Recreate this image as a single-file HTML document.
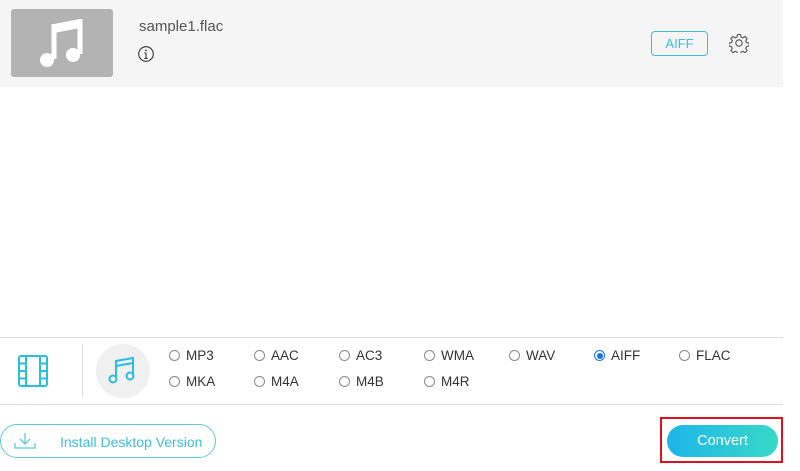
<!DOCTYPE html>
<html><head><meta charset="utf-8"><style>
body{margin:0;width:800px;height:471px;background:#fff;font-family:"Liberation Sans",Arial,sans-serif;position:relative;overflow:hidden}
.abs{position:absolute}
.top{left:0;top:0;width:783px;height:87px;background:#f5f5f5}
.thumb{left:11px;top:9px;width:102px;height:68px;background:#b3b3b3;border-radius:3px}
.fn{left:139px;top:18px;font-size:15px;color:#555}
.aiff{left:651px;top:31px;width:55px;height:23px;border:1px solid #3cbfd6;border-radius:4px;color:#3cbfd6;font-size:13px;text-align:center;line-height:23px}
.hl{left:0;width:783px;height:1px;background:#ddd}
.r{position:absolute;font-size:13.5px;color:#333}
.r i{position:absolute;left:-17px;top:2px;width:9px;height:9px;border:1px solid #888;border-radius:50%}
.r i.on{border-color:#1a73e8}
.r i.on:after{content:"";position:absolute;left:1.5px;top:1.5px;width:6px;height:6px;border-radius:50%;background:#1a73e8}
.inst{left:0;top:424px;width:214px;height:32px;border:1px solid #62c8d9;border-radius:17px;color:#3cbfd6;font-size:14px}
.conv{left:667px;top:425px;width:111px;height:32px;border-radius:16px;background:linear-gradient(90deg,#1db5ea,#37d9c7);color:#fff;font-size:14.5px;text-align:center;line-height:32px}
.red{left:660px;top:417px;width:119px;height:42px;border:2px solid #e01020}
</style></head><body>
<div class="abs top"></div>
<div class="abs thumb"><svg width="102" height="68" viewBox="0 0 102 68"><path d="M43 15 L69 10 L69 19 L43 24Z" fill="#fff"/><path d="M43 15 L43 50 M69 10 L69 45" stroke="#fff" stroke-width="5"/><circle cx="36" cy="51" r="7" fill="#fff"/><circle cx="62" cy="46" r="7" fill="#fff"/></svg></div>
<div class="abs fn">sample1.flac</div>
<svg class="abs" style="left:137px;top:45px" width="18" height="18"><circle cx="9" cy="9" r="7.3" stroke="#333" fill="none" stroke-width="1.1"/><path d="M9 8v5.5M7.3 13.5h3.4M7.3 8h1.7" stroke="#333" stroke-width="1.1" fill="none"/><circle cx="9" cy="5.5" r=".9" fill="#333"/></svg>
<div class="abs aiff">AIFF</div>
<svg class="abs" style="left:729px;top:33px" width="20" height="20" viewBox="0 0 20 20"><path d="M8.5 1.5h3l.5 2.5 1.8.9 2.2-1.4 2.1 2.1-1.4 2.2.9 1.8 2.5.5v3l-2.5.5-.9 1.8 1.4 2.2-2.1 2.1-2.2-1.4-1.8.9-.5 2.5h-3l-.5-2.5-1.8-.9-2.2 1.4-2.1-2.1 1.4-2.2-.9-1.8-2.5-.5v-3l2.5-.5.9-1.8-1.4-2.2 2.1-2.1 2.2 1.4 1.8-.9z" fill="none" stroke="#555" stroke-width="1.1"/><circle cx="10" cy="10" r="3.2" fill="none" stroke="#555" stroke-width="1.1"/></svg>
<div class="abs hl" style="top:337px"></div>
<div class="abs hl" style="top:404px"></div>
<svg class="abs" style="left:18px;top:355px" width="30" height="32"><rect x="1" y="1" width="28" height="30" rx="2" fill="none" stroke="#29bde0" stroke-width="2"/><path d="M8 1v30M22 1v30M1 8.5h7M1 16h7M1 23.5h7M22 8.5h7M22 16h7M22 23.5h7" stroke="#29bde0" stroke-width="2"/></svg>
<div class="abs" style="left:82px;top:344px;width:1px;height:53px;background:#ddd"></div>
<div class="abs" style="left:96px;top:344px;width:54px;height:54px;border-radius:50%;background:#f0f0f0"></div>
<svg class="abs" style="left:108px;top:356px" width="30" height="30"><path d="M8 22V5l17-3v17M8 10l17-3" stroke="#29bde0" stroke-width="2" fill="none"/><circle cx="5" cy="23" r="3.5" fill="none" stroke="#29bde0" stroke-width="2"/><circle cx="22" cy="20" r="3.5" fill="none" stroke="#29bde0" stroke-width="2"/></svg>
<div class="r" style="left:186px;top:348px"><i></i>MP3</div>
<div class="r" style="left:271px;top:348px"><i></i>AAC</div>
<div class="r" style="left:356px;top:348px"><i></i>AC3</div>
<div class="r" style="left:441px;top:348px"><i></i>WMA</div>
<div class="r" style="left:526px;top:348px"><i></i>WAV</div>
<div class="r" style="left:611px;top:348px"><i class="on"></i>AIFF</div>
<div class="r" style="left:696px;top:348px"><i></i>FLAC</div>
<div class="r" style="left:186px;top:374px"><i></i>MKA</div>
<div class="r" style="left:271px;top:374px"><i></i>M4A</div>
<div class="r" style="left:356px;top:374px"><i></i>M4B</div>
<div class="r" style="left:441px;top:374px"><i></i>M4R</div>
<div class="abs inst"><svg class="abs" style="left:13px;top:7px" width="22" height="18"><path d="M11 1v11M6 7l5 5 5-5M1 11v5h20v-5" stroke="#62c8d9" stroke-width="1.3" fill="none"/></svg><span class="abs" style="left:59px;top:9px">Install Desktop Version</span></div>
<div class="abs red"></div>
<div class="abs conv">Convert</div>
</body></html>
